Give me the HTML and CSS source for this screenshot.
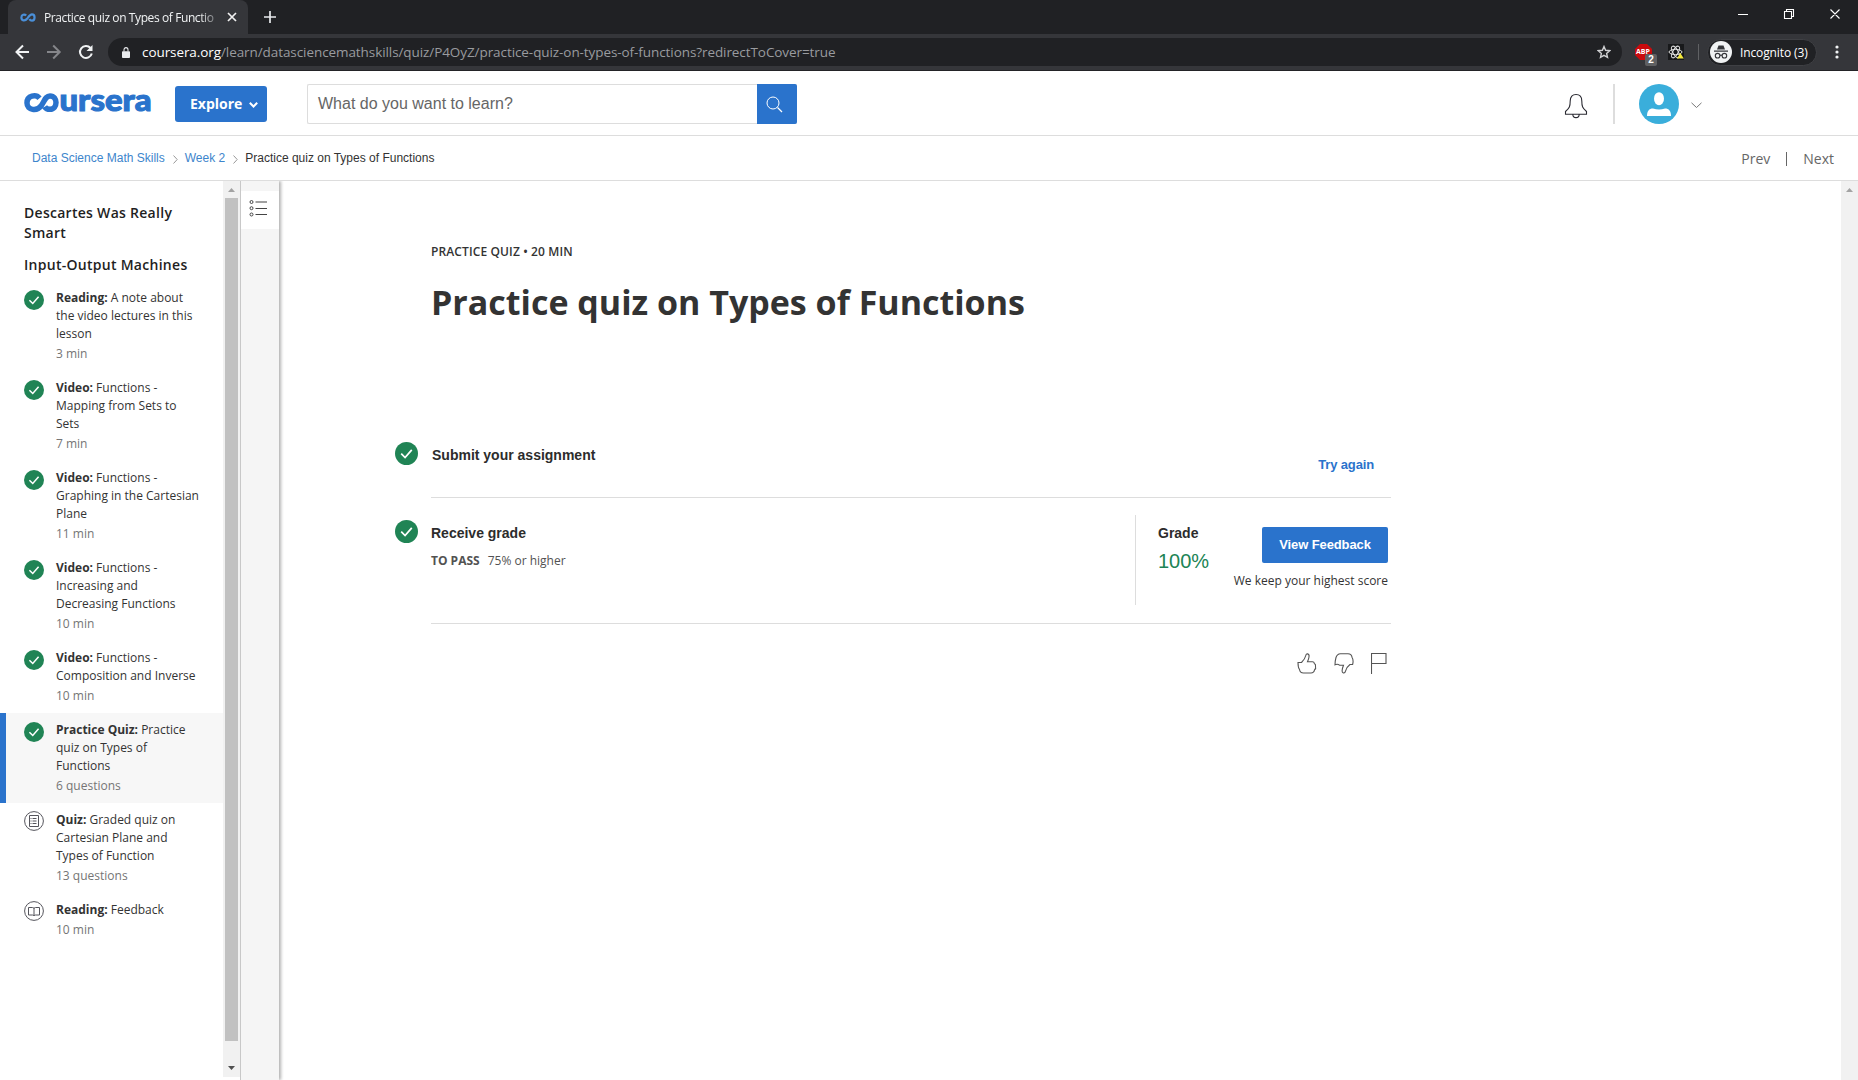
FILE: index.html
```html
<!DOCTYPE html>
<html lang="en">
<head>
<meta charset="utf-8">
<title>Practice quiz on Types of Functions</title>
<link rel="stylesheet" href="styles.css">
</head>
<body>
<svg width="0" height="0" class="defs">
  <symbol id="done" viewBox="0 0 24 24"><circle cx="12" cy="12" r="12" fill="#208455"/><path d="M6.500 12.200l4 4 7-8" fill="none" stroke="#fff" stroke-width="1.800"/></symbol>
</svg>

<div class="tabs">
  <div class="tab">
    <svg class="favicon" width="16" height="9" viewBox="0 0 16 9"><path d="M6.2 2.6C4.500 .8 1.400 1.500 1.400 4.500C1.400 7.800 5 8.400 7.300 5.500C9 3.200 10 1.400 12 1.400C15.400 1.400 15.400 7.600 12 7.600C10.800 7.600 9.900 7 9.300 6.200" fill="none" stroke="#4a8fd8" stroke-width="2.200"/></svg>
    <span class="tab-title">Practice quiz on Types of Functio</span>
    <svg class="tab-x" width="10" height="10" viewBox="0 0 10 10"><path d="M1 1l8 8M9 1l-8 8" stroke="#f1f1f1" stroke-width="1.700"/></svg>
  </div>
  <svg class="plus" width="12" height="12" viewBox="0 0 12 12"><path d="M6 0v12M0 6h12" stroke="#e8eaed" stroke-width="1.700"/></svg>
  <svg class="win" width="104" height="12" viewBox="0 0 104 12" fill="none" stroke="#fff"><path d="M0 6.500h10M46.500 3.500h7v7h-7zM48.500 3.500v-2h7v7h-2M92.500 1.500l9 9M101.500 1.500l-9 9" stroke-width="1.100"/></svg>
</div>

<div class="toolbar">
  <svg class="nav" width="80" height="16" viewBox="0 0 80 16" fill="none" stroke="#f1f3f4" stroke-width="2"><path d="M14 8H1.500M8 1.500L1.500 8L8 14.500"/><path d="M32 8h12.500M38.200 1.500L44.700 8L38.200 14.500" stroke="#85868a"/><path d="M75.500 4A6 6 0 1 0 76.800 9.500"/><path d="M77.500 1v6h-6z" fill="#f1f3f4" stroke="none"/></svg>
  <div class="omnibox">
    <svg width="8" height="11" viewBox="0 0 10 12" preserveAspectRatio="none"><path d="M1 4.500h8a1 1 0 0 1 1 1V11a1 1 0 0 1-1 1H1a1 1 0 0 1-1-1V5.500a1 1 0 0 1 1-1z" fill="#e8eaed"/><path d="M2.500 5V3a2.500 2.300 0 0 1 5 0v2" fill="none" stroke="#e8eaed" stroke-width="1.300"/></svg>
    <span class="url"><b>coursera.org</b>/learn/datasciencemathskills/quiz/P4OyZ/practice-quiz-on-types-of-functions?redirectToCover=true</span>
    <svg class="star" width="14" height="14" viewBox="0 0 14 14"><path d="M7 1.500l1.600 3.800 4.100.4-3.100 2.700.9 4-3.500-2.100-3.500 2.100.9-4L1.300 5.700l4.100-.4z" fill="none" stroke="#d0d1d3" stroke-width="1.400"/></svg>
  </div>
  <div class="abp"><svg width="17" height="16" viewBox="0 0 17 16"><path d="M5 0h7l5 5v6l-5 5H5l-5-5V5z" fill="#c90a0d"/></svg><b>ABP</b><i>2</i></div>
  <svg class="react" width="16" height="16" viewBox="0 0 16 16"><path fill="#18191b" d="M0 0h16v16H0z"/><g fill="none" stroke="#ddd"><ellipse cx="7.500" cy="8" rx="6.500" ry="2.600"/><ellipse cx="7.500" cy="8" rx="6.500" ry="2.600" transform="rotate(60 7.500 8)"/><ellipse cx="7.500" cy="8" rx="6.500" ry="2.600" transform="rotate(120 7.500 8)"/></g><path d="M12.300 9l3.500 5.500H9z" fill="#f5e93c"/></svg>
  <span class="tool-sep"></span>
  <div class="incog">
    <svg width="22" height="22" viewBox="0 0 22 22"><circle cx="11" cy="11" r="11" fill="#f1f3f4"/><path d="M7 8.500l1.500-4h5l1.500 4zM4 9.500h14v1.300H4z" fill="#35363a"/><g fill="none" stroke="#35363a" stroke-width="1.100"><circle cx="7.600" cy="14.700" r="2.300"/><circle cx="14.400" cy="14.700" r="2.300"/><path d="M10 14.500q1-.7 2 0"/></g></svg>
    <span>Incognito (3)</span>
  </div>
  <svg class="dots" width="4" height="14" viewBox="0 0 4 14" fill="#f1f3f4"><circle cx="2" cy="2" r="1.600"/><circle cx="2" cy="7" r="1.600"/><circle cx="2" cy="12" r="1.600"/></svg>
</div>

<header class="header">
  <svg class="logo" width="128" height="20" viewBox="0 0 128 20"><path d="M15.500 5.200C12 1 3 2.300 3 9.900C3 17.500 13 18.700 17.300 12.600C20.500 8 21.500 2.900 26 2.900C34 2.900 34 16.300 26 16.300C23.500 16.300 21.700 15.300 20.700 13.700" fill="none" stroke="#2a73cc" stroke-width="5.500"/><text class="logo-text" x="35.500" y="18" textLength="92" lengthAdjust="spacingAndGlyphs">ursera</text></svg>
  <button class="explore">Explore<svg width="9" height="6" viewBox="0 0 9 6"><path d="M.8.8L4.500 4.500 8.200.8" fill="none" stroke="#fff" stroke-width="2"/></svg></button>
  <div class="search"><span>What do you want to learn?</span><div class="search-btn"><svg width="17" height="17" viewBox="0 0 17 17" fill="none" stroke="#fff"><circle cx="7" cy="7" r="6"/><path d="M11.500 11.500l4.500 4.500" stroke-width="1.300"/></svg></div></div>
  <svg class="bell" width="24" height="26" viewBox="0 0 24 26" fill="none" stroke="#2b2b33" stroke-width="1.100"><path d="M1.500 21.200v-2.700c4-3.500 4.700-5 4.700-10.500C6.200 3.500 8.500 1.500 12 1.500s5.800 2 5.800 6.500c0 5.500.7 7 4.700 10.500v2.700zM8.800 21.200c0 4.500 6.400 4.500 6.400 0"/></svg>
  <span class="head-sep"></span>
  <svg class="avatar" width="40" height="40" viewBox="0 0 40 40"><circle cx="20" cy="20" r="20" fill="#3aaedb"/><ellipse cx="20" cy="14.700" rx="5" ry="6.500" fill="#fff"/><path d="M8 32c0-5 2-7.500 6-7.500 4 1.300 8 1.300 12 0 4 0 6 2.500 6 7.500z" fill="#fff"/></svg>
  <svg class="caret" width="11" height="7" viewBox="0 0 11 7"><path d="M.5.8l5 4.700 5-4.700" fill="none" stroke="#777"/></svg>
</header>

<nav class="crumbs">
  <a>Data Science Math Skills</a><svg width="5" height="9" viewBox="0 0 5 9"><path d="M.5.5l3.700 4-3.700 4" fill="none" stroke="#999"/></svg>
  <a>Week 2</a><svg width="5" height="9" viewBox="0 0 5 9"><path d="M.5.5l3.700 4-3.700 4" fill="none" stroke="#999"/></svg>
  <span>Practice quiz on Types of Functions</span>
  <span class="prev">Prev</span><span class="pn-sep"></span><span class="next">Next</span>
</nav>

<div class="body">
  <aside class="side">
    <h2>Descartes Was Really<br>Smart</h2>
    <h2 class="second">Input-Output Machines</h2>
    <div class="item"><svg class="ic"><use href="#done"/></svg><div><p><b>Reading:</b> A note about<br>the video lectures in this<br>lesson</p><small>3 min</small></div></div>
    <div class="item"><svg class="ic"><use href="#done"/></svg><div><p><b>Video:</b> Functions -<br>Mapping from Sets to<br>Sets</p><small>7 min</small></div></div>
    <div class="item"><svg class="ic"><use href="#done"/></svg><div><p><b>Video:</b> Functions -<br>Graphing in the Cartesian<br>Plane</p><small>11 min</small></div></div>
    <div class="item"><svg class="ic"><use href="#done"/></svg><div><p><b>Video:</b> Functions -<br>Increasing and<br>Decreasing Functions</p><small>10 min</small></div></div>
    <div class="item"><svg class="ic"><use href="#done"/></svg><div><p><b>Video:</b> Functions -<br>Composition and Inverse</p><small>10 min</small></div></div>
    <div class="item current"><svg class="ic"><use href="#done"/></svg><div><p><b>Practice Quiz:</b> Practice<br>quiz on Types of<br>Functions</p><small>6 questions</small></div></div>
    <div class="item"><svg class="ic open" viewBox="0 0 20 20" fill="none" stroke="#55555c"><circle cx="10" cy="10" r="9.400"/><path d="M5.500 4.500h9v11h-9zM8.500 7.500h4M8.500 10h4M8.500 12.500h4M6.500 7.500h1M6.500 10h1M6.500 12.500h1"/></svg><div><p><b>Quiz:</b> Graded quiz on<br>Cartesian Plane and<br>Types of Function</p><small>13 questions</small></div></div>
    <div class="item"><svg class="ic open" viewBox="0 0 20 20" fill="none" stroke="#55555c"><circle cx="10" cy="10" r="9.400"/><path d="M4.500 6.500h4q1.500 0 1.500 1.200q0-1.200 1.500-1.200h4v7.500h-4q-1.500 0-1.500 1q0-1-1.500-1h-4zM10 7.500v7.500"/></svg><div><p><b>Reading:</b> Feedback</p><small>10 min</small></div></div>
  </aside>
  <div class="sbar"><svg width="7" height="4" viewBox="0 0 7 4"><path d="M3.500 0L7 4H0z" fill="#a3a3a3"/></svg><div class="thumb"></div><svg width="7" height="4" viewBox="0 0 7 4"><path d="M0 0h7L3.500 4z" fill="#505050"/></svg></div>
  <div class="rail"><div class="rail-btn"><svg width="18" height="18" viewBox="0 0 18 18" fill="none" stroke="#444"><circle cx="2.500" cy="3" r="1.500"/><circle cx="2.500" cy="9.200" r="1.500"/><circle cx="2.500" cy="15.500" r="1.500"/><path d="M6.500 3H18M6.500 9.500H18M6.500 15.500H18" stroke-width="1.200"/></svg></div></div>
  <main class="main">
    <div class="kicker">PRACTICE QUIZ • 20 MIN</div>
    <h1>Practice quiz on Types of Functions</h1>
    <section class="row submit">
      <svg class="big"><use href="#done"/></svg><h3>Submit your assignment</h3><a class="again">Try again</a>
    </section>
    <section class="row receive">
      <svg class="big"><use href="#done"/></svg>
      <div class="rec"><h3>Receive grade</h3><p><b>TO PASS</b><span>75% or higher</span></p></div>
      <div class="grade"><div><h3>Grade</h3><div class="pct">100%</div></div>
        <div class="fb"><button>View Feedback</button><p>We keep your highest score</p></div></div>
    </section>
    <div class="react-icons">
      <svg width="20" height="21" viewBox="0 0 20 21"><path d="M1 9.500H4.500Q8 6 8.800 2.500Q9.200.6 10.600.9Q12.500 1.300 12 4Q11.700 6 10.500 8.800H15.500Q17 8.800 17.400 10.500Q19 11.500 18.500 13.300Q19.200 15.500 17.600 16.700Q17 20 14 20H6.500Q3 20 2.500 16.500Q1 14.500 1 9.500z"/></svg>
      <svg width="20" height="21" viewBox="0 0 20 21"><path d="M1 11.800Q1 8 2 4.500Q3 1 6.500.8H14Q17.500 1 18 4.200Q19.800 7 18.600 11.500H16Q12.500 14 11.500 18.200Q11 20.300 9.300 19.900Q7.800 19.500 8.200 17Q8.500 14.800 9.500 12.200H5.500Q3.500 10.500 1 11.800z" /></svg>
      <svg width="16" height="21" viewBox="0 0 16 21"><path d="M.5 21V.5h14.500v10H.5"/></svg>
    </div>
  </main>
  <div class="page-sb"><svg width="7" height="4" viewBox="0 0 7 4"><path d="M3.500 0L7 4H0z" fill="#a3a3a3"/></svg></div>
</div>
</body>
</html>
```
FILE: styles.css
```css
* { box-sizing: border-box; }
body { margin: 0; width: 1858px; height: 1080px; overflow: hidden; background: #fff; color: #333; font-family: "Open Sans", "Noto Sans", sans-serif; display: flex; flex-direction: column; }
h1, h2, h3, p { margin: 0; }
svg { display: block; flex: none; }
.defs { position: absolute; }

.tabs { height: 34px; flex: none; background: #202124; display: flex; padding-left: 8px; }
.tab { width: 240px; height: 34px; background: #35363a; border-radius: 8px 8px 0 0; display: flex; align-items: center; padding-left: 12px; }
.tab-title { width: 176px; margin-left: 8px; white-space: nowrap; color: #f1f3f4; font-size: 12px; letter-spacing: -.4px; -webkit-mask-image: linear-gradient(90deg, #000 155px, transparent 180px); mask-image: linear-gradient(90deg, #000 155px, transparent 180px); }
.tab-x { margin-left: 7px; }
.plus { margin: 11px 0 0 16px; }
.win { margin: 8px 16px 0 auto; }

.toolbar { height: 37px; flex: none; background: #35363a; border-bottom: 1px solid #232327; display: flex; align-items: center; }
.nav { margin-left: 15px; }
.omnibox { margin-left: 13px; width: 1514px; height: 28px; border-radius: 14px; background: #202124; display: flex; align-items: center; padding-left: 14px; }
.url { margin-left: 12px; font-size: 13.500px; letter-spacing: -.08px; color: #999b9f; white-space: nowrap; }
.url b { color: #fff; font-weight: 400; }
.star { margin-left: auto; margin-right: 11px; }
.abp { position: relative; width: 17px; height: 16px; margin-left: 13px; }
.abp b { position: absolute; left: 1px; top: 4px; color: #fff; font: bold 7px/8px "Open Sans", sans-serif; }
.abp i { position: absolute; left: 10px; top: 10px; width: 12px; height: 12px; border-radius: 2px; background: #5f6062; color: #fff; font: bold 10px/12px "Liberation Sans", sans-serif; text-align: center; }
.react { margin-left: 16px; }
.tool-sep { width: 1px; height: 16px; background: #606164; margin-left: 14px; }
.incog { margin-left: 8px; width: 110px; height: 27px; border-radius: 14px; border: 1px solid #3f4044; background: #202124; display: flex; align-items: center; padding-left: 2px; color: #fff; font-size: 12px; white-space: nowrap; }
.incog span { margin-left: 8px; letter-spacing: -.12px; }
.dots { margin-left: 18px; }

.header { height: 65px; flex: none; border-bottom: 1px solid #ddd; display: flex; align-items: flex-start; padding: 13px 0 0 24px; }
.logo { margin-top: 9px; overflow: visible; }
.logo-text { font: 900 31px Lato, sans-serif; fill: #2a73cc; stroke: #2a73cc; stroke-width: 1.1px; }
.explore { margin: 2px 0 0 23px; width: 92px; height: 36px; border: 0; border-radius: 3px; background: #2a73cc; color: #fff; font: bold 14px "Open Sans", sans-serif; display: flex; align-items: center; padding: 0 0 2px 15px; }
.explore svg { margin: 4px 0 0 7px; }
.search { margin-left: 40px; width: 490px; height: 40px; border: 1px solid #ddd; border-right: 0; border-radius: 2px; display: flex; font: 16px/37px "Liberation Sans", sans-serif; color: #666; padding-left: 10px; }
.search-btn { margin: -1px 0 0 auto; width: 40px; height: 40px; background: #2a73cc; border-radius: 0 2px 2px 0; padding: 12px 0 0 9px; }
.bell { margin: 9px 0 0 767px; }
.head-sep { width: 2px; height: 40px; background: #ddd; margin-left: 25px; }
.avatar { margin-left: 24px; }
.caret { margin: 18px 0 0 12px; }

.crumbs { height: 45px; flex: none; border-bottom: 1px solid #ddd; display: flex; align-items: center; padding: 0 24px 0 32px; font: 12px "Liberation Sans", sans-serif; color: #333; white-space: nowrap; }
.crumbs a { color: #3d85cc; }
.crumbs svg { margin: 2px 7px 0 8px; }
.prev, .next { font: 14px "Open Sans", sans-serif; color: #666; margin-top: 1px; }
.prev { margin-left: auto; }
.pn-sep { width: 1px; height: 14px; background: #666; margin: 1px 16px 0 16px; }

.body { flex: 1; min-height: 0; display: flex; }
.side { width: 223px; padding-top: 22px; }
.side h2 { margin-left: 24px; font: 600 14px/20px "Open Sans", sans-serif; letter-spacing: .28px; color: #1f1f1f; white-space: nowrap; }
.side .second { margin: 12px 0 6px 24px; }
.item { display: flex; padding: 8px 0 8px 24px; font-size: 12px; line-height: 18px; white-space: nowrap; }
.item p { margin-bottom: 2px; }
.item b { font-weight: 700; }
.item small { display: block; font-size: 12px; color: #757575; }
.ic { width: 20px; height: 20px; margin: 1px 12px 0 0; }
.open { margin-top: 0; }
.current { background: #f7f7f7; border-left: 6px solid #2a73cc; padding-left: 18px; }
.sbar { width: 17px; height: 896px; background: #f1f1f1; display: flex; flex-direction: column; align-items: center; padding: 7px 0 7px; }
.thumb { width: 13px; height: 843px; background: #c1c1c1; margin: 6px 0 25px; }
.rail { width: 39px; background: #f5f5f5; border-left: 1px solid #c8c8c8; box-shadow: 2px 0 3px rgba(0,0,0,.3); padding-top: 10px; clip-path: inset(0 -6px 0 0); }
.rail-btn { height: 38px; background: #fff; padding: 8px 0 0 8px; }

.main { flex: 1; padding: 62px 0 0 116px; }
.kicker { margin-left: 36px; font-size: 12px; font-weight: 600; line-height: 18px; letter-spacing: .12px; }
h1 { margin: 16px 0 0 36px; font-size: 34px; line-height: 50px; font-weight: 700; white-space: nowrap; }
h3 { font: bold 14px/18px "Liberation Sans", sans-serif; color: #2c2c2c; }
.row { width: 995px; display: flex; position: relative; }
.big { width: 23px; height: 23px; margin-right: 13px; }
.submit { margin-top: 115px; height: 55px; }
.submit h3 { margin: 4px auto 0 1px; }
.again { font: bold 13px/18px "Liberation Sans", sans-serif; letter-spacing: -.15px; color: #2a73cc; margin: 14px 16px 0 0; }
.receive { height: 127px; border: solid #ddd; border-width: 1px 0; width: 960px; margin-left: 36px; }
.receive .big { margin: 22px 13px 0 -36px; }
.rec { width: 704px; padding-top: 26px; }
.rec p { display: flex; font-size: 12px; line-height: 18px; margin-top: 10px; color: #525252; }
.rec p span { margin-left: 8px; }
.grade { height: 90px; margin-top: 17px; width: 253px; border-left: 1px solid #ddd; display: flex; justify-content: space-between; padding: 9px 0 0 22px; }
.pct { font: 20px/24px "Liberation Sans", sans-serif; color: #208455; margin-top: 7px; }
.fb { display: flex; flex-direction: column; align-items: flex-end; margin-top: 3px; }
.fb button { width: 126px; height: 36px; border: 0; border-radius: 2px; background: #2a73cc; color: #fff; font: bold 13px "Liberation Sans", sans-serif; letter-spacing: -.1px; padding: 0 0 2px; }
.fb p { font-size: 12px; line-height: 18px; margin-top: 9px; white-space: nowrap; }
.react-icons { display: flex; gap: 17px; margin: 29px 0 0 902px; }
.react-icons path { fill: none; stroke: #555; stroke-width: 1.1; }
.page-sb { width: 17px; background: #f1f1f1; padding: 7px 0 0 5px; }
```
